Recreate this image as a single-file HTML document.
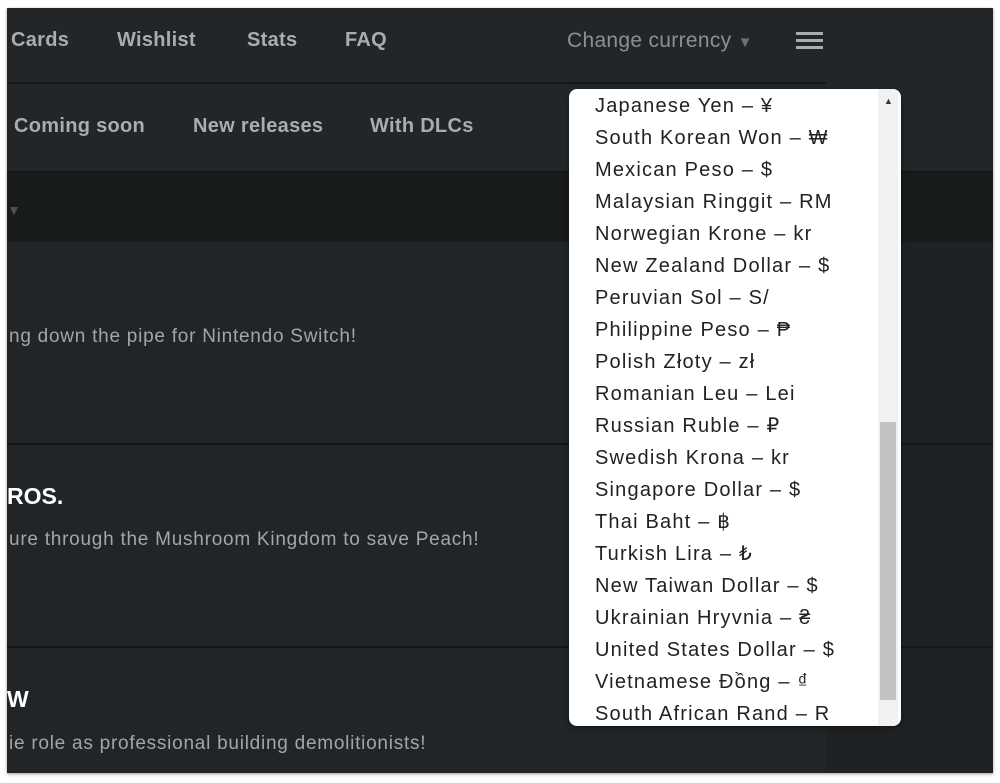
<!DOCTYPE html>
<html><head><meta charset="utf-8"><style>
*{margin:0;padding:0;box-sizing:border-box}
body{width:1000px;height:783px;background:#fff;position:relative;overflow:hidden;font-family:"Liberation Sans",sans-serif}
.frame{position:absolute;left:7px;top:8px;width:986px;height:765px;background:#212527;overflow:hidden;box-shadow:0 1px 3px rgba(0,0,0,.4)}
.a{position:absolute;white-space:nowrap}
.nav{color:#a9adb0;font-size:20px;font-weight:bold;letter-spacing:0.3px}
.txt{color:#a2a6a9;font-size:19px;letter-spacing:0.75px}
.hl{position:absolute;height:2px;background:#141617}
.dd{position:absolute;left:569px;top:89px;width:332px;height:637px;background:#fff;border-radius:8px;overflow:hidden;box-shadow:0 2px 6px rgba(0,0,0,.4)}
.dd div{position:absolute;left:26px;font-size:20px;line-height:24px;height:24px;color:#222;white-space:nowrap;letter-spacing:1.2px}
</style></head><body>
<div class="frame">
 <div class="a" style="left:0;top:0;width:986px;height:164px;background:#222628"></div>
 <div class="hl" style="left:0;top:74px;width:819px"></div>
 <div class="a" style="left:0;top:164px;width:986px;height:70px;background:#181b1c"></div>
 <div class="a" style="left:0;top:163px;width:986px;height:2px;background:#141617"></div>
 <div class="a nav" style="left:4px;top:21px">Cards</div>
 <div class="a nav" style="left:110px;top:21px">Wishlist</div>
 <div class="a nav" style="left:240px;top:21px">Stats</div>
 <div class="a nav" style="left:338px;top:21px">FAQ</div>
 <div class="a nav" style="left:560px;top:21px;color:#8b9093;font-weight:normal;font-size:21px">Change currency <span style="font-size:15px;color:#6c7174">▼</span></div>
 <div class="a" style="left:789px;top:24px;width:27px;height:3px;background:#a9adb0;box-shadow:0 7px 0 #a9adb0,0 14px 0 #a9adb0"></div>
 <div class="a nav" style="left:7px;top:107px">Coming soon</div>
 <div class="a nav" style="left:186px;top:107px">New releases</div>
 <div class="a nav" style="left:363px;top:107px">With DLCs</div>
 <div class="a" style="left:0;top:194px;color:#4b4f52;font-size:14px">▼</div>
 <div class="a" style="left:819px;top:234px;width:167px;height:531px;background:#1f2224"></div>
 <div class="a txt" style="left:2px;top:318px">ng down the pipe for Nintendo Switch!</div>
 <div class="hl" style="left:0;top:435px;width:986px"></div>
 <div class="a" style="left:0;top:475px;color:#fff;font-size:23px;font-weight:bold">ROS.</div>
 <div class="a txt" style="left:2px;top:521px">ure through the Mushroom Kingdom to save Peach!</div>
 <div class="hl" style="left:0;top:638px;width:986px"></div>
 <div class="a" style="left:0;top:678px;color:#fff;font-size:23px;font-weight:bold">W</div>
 <div class="a txt" style="left:2px;top:725px">ie role as professional building demolitionists!</div>
</div>
<div class="dd">
 <div style="top:5px">Japanese Yen – ¥</div>
 <div style="top:37px">South Korean Won – ₩</div>
 <div style="top:69px">Mexican Peso – $</div>
 <div style="top:101px">Malaysian Ringgit – RM</div>
 <div style="top:133px">Norwegian Krone – kr</div>
 <div style="top:165px">New Zealand Dollar – $</div>
 <div style="top:197px">Peruvian Sol – S/</div>
 <div style="top:229px">Philippine Peso – ₱</div>
 <div style="top:261px">Polish Złoty – zł</div>
 <div style="top:293px">Romanian Leu – Lei</div>
 <div style="top:325px">Russian Ruble – ₽</div>
 <div style="top:357px">Swedish Krona – kr</div>
 <div style="top:389px">Singapore Dollar – $</div>
 <div style="top:421px">Thai Baht – ฿</div>
 <div style="top:453px">Turkish Lira – ₺</div>
 <div style="top:485px">New Taiwan Dollar – $</div>
 <div style="top:517px">Ukrainian Hryvnia – ₴</div>
 <div style="top:549px">United States Dollar – $</div>
 <div style="top:581px">Vietnamese Đồng – ₫</div>
 <div style="top:613px">South African Rand – R</div>
 <span style="position:absolute;left:309px;top:0;width:20px;height:637px;background:#f1f1f1"></span>
 <span style="position:absolute;left:311px;top:333px;width:16px;height:278px;background:#c1c1c1"></span>
 <span style="position:absolute;left:315px;top:7px;font-size:9px;color:#333">▲</span>
</div>
</body></html>
